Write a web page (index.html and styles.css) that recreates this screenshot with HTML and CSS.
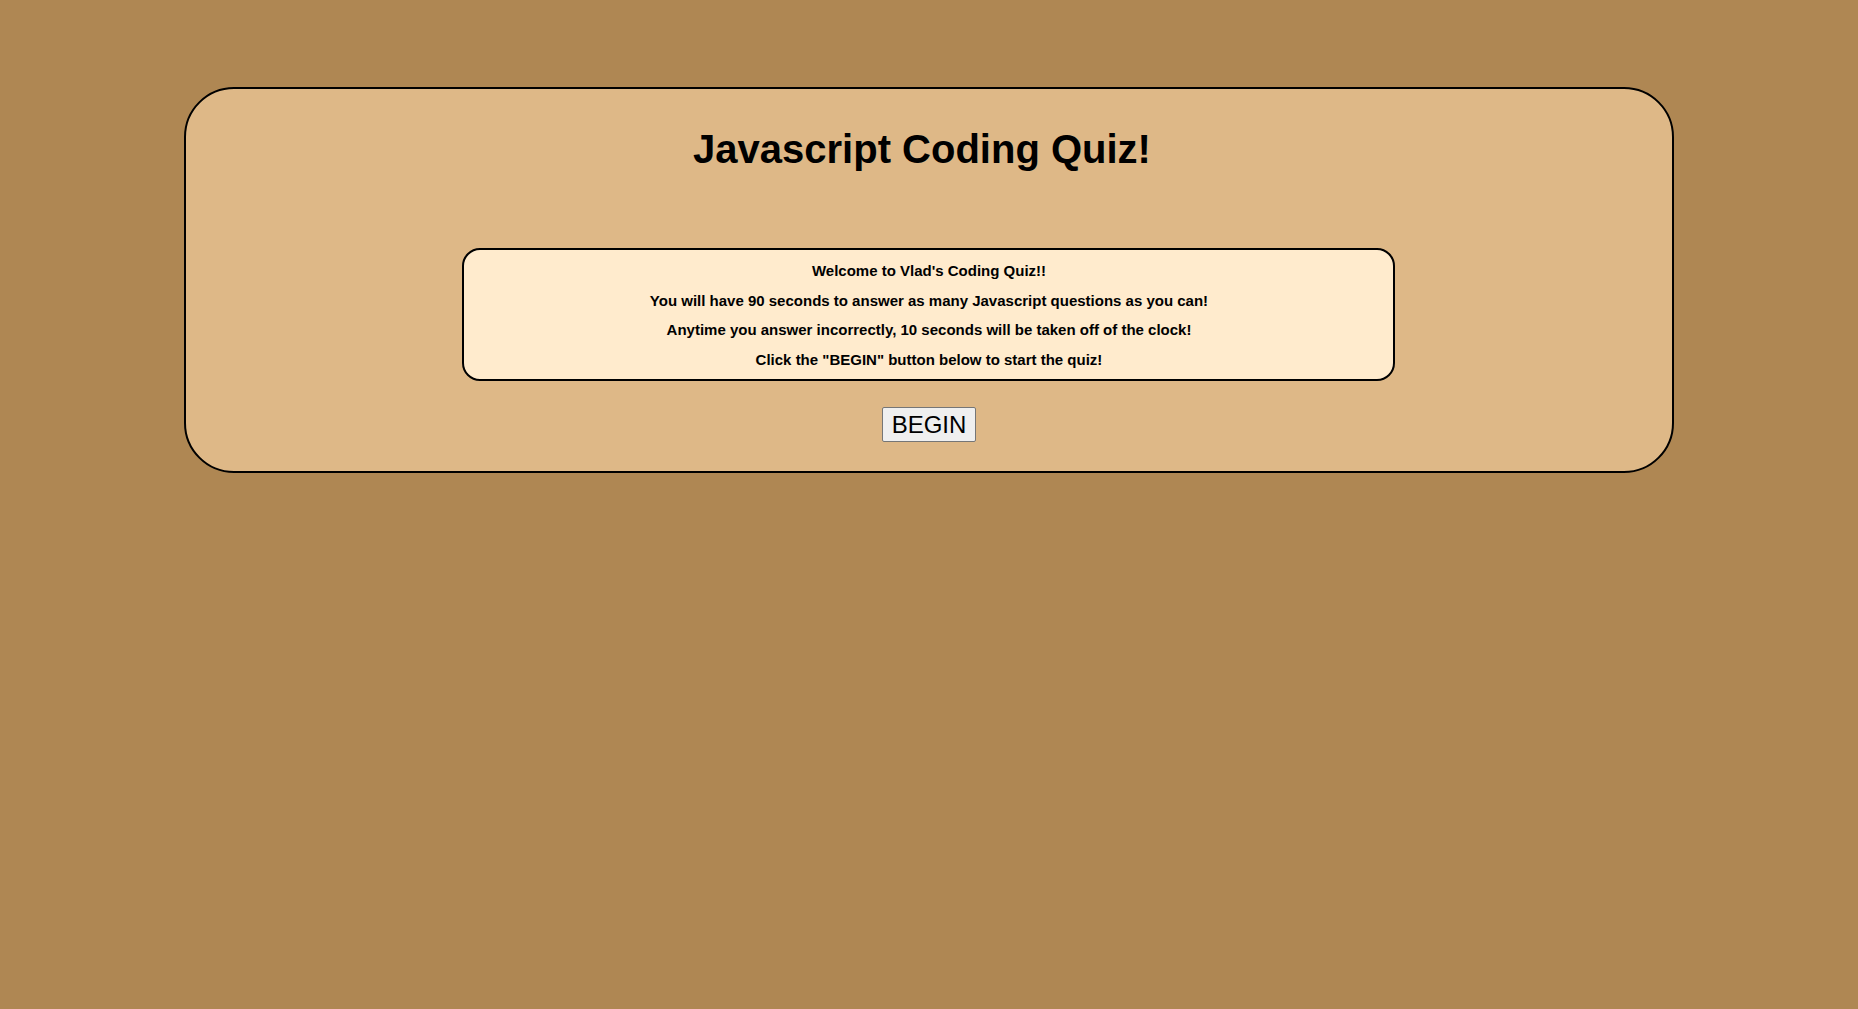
FILE: index.html
```html
<!DOCTYPE html>
<html lang="en">
<head>
<meta charset="utf-8">
<title>Javascript Coding Quiz</title>
<link rel="stylesheet" href="styles.css">
</head>
<body>
<main class="quiz">
  <h1 class="title">Javascript Coding Quiz!</h1>
  <section class="intro">
    <p>Welcome to Vlad's Coding Quiz!!</p>
    <p>You will have 90 seconds to answer as many Javascript questions as you can!</p>
    <p>Anytime you answer incorrectly, 10 seconds will be taken off of the clock!</p>
    <p>Click the "BEGIN" button below to start the quiz!</p>
  </section>
  <div class="actions">
    <button class="begin" type="button">BEGIN</button>
  </div>
</main>
</body>
</html>
```

FILE: styles.css
```css
html, body {
  margin: 0;
  padding: 0;
}
body {
  background: #af8753;
  font-family: "Liberation Sans", Arial, sans-serif;
  color: #000;
  min-height: 1009px;
}
.quiz {
  width: 80%;
  margin: 87px auto 0;
  background: #deb887;
  border: 2px solid #000;
  border-radius: 50px;
  padding: 0 0 29px;
  display: flex;
  flex-direction: column;
  align-items: center;
}
.title {
  margin: 37px 0 0;
  padding-right: 14px;
  font-size: 40px;
  line-height: 46px;
  font-weight: bold;
  text-align: center;
}
.intro {
  margin-top: 76px;
  width: 929px;
  box-sizing: content-box;
  background: #ffebcd;
  border: 2px solid #000;
  border-radius: 18px;
  padding: 6px 0 5px;
  text-align: center;
}
.intro p {
  margin: 0;
  font-size: 15px;
  font-weight: bold;
  line-height: 29.6px;
}
.actions {
  margin-top: 26px;
}
.begin {
  font-family: "Liberation Sans", Arial, sans-serif;
  font-size: 24px;
  height: 35px;
  padding: 1px 9px;
  background: #efefef;
  color: #000;
  border: 1px solid #767676;
  border-radius: 2px;
}
```
